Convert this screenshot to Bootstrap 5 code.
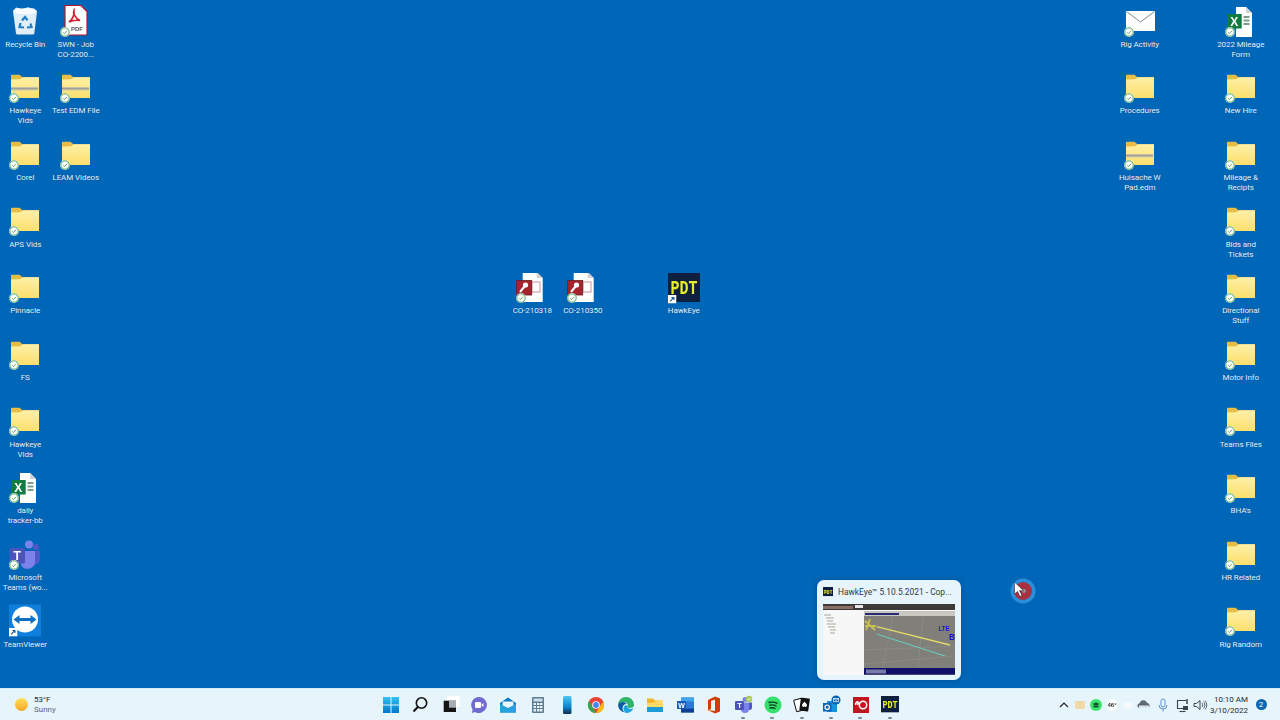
<!DOCTYPE html>
<html lang="en">
<head>
    <meta charset="UTF-8">
    <meta name="viewport" content="width=device-width, initial-scale=1.0">
    <title>Desktop</title>
    <link href="https://cdn.jsdelivr.net/npm/bootstrap@5.3.2/dist/css/bootstrap.min.css" rel="stylesheet">
    <style>
        body {
            width: 1280px;
            height: 720px;
            overflow: hidden;
            background: #0067b8;
            font-family: Roboto, "Noto Sans", sans-serif;
        }
        .desktop { height: 688px; }
        .strip-left { position: absolute; left: 0; top: 0; }
        .strip-right { position: absolute; right: 14px; top: 0; gap: 50.5px; }
        .strip-mid { position: absolute; left: 507px; top: 266.67px; }
        .desk-col { width: 50.5px; }
        .desk-item { height: 66.67px; padding-top: 6.5px; }
        .desk-ico { position: relative; width: 32px; height: 32px; flex: none; filter: blur(.3px); }
        .desk-ico > svg { display: block; width: 32px; height: 32px; overflow: visible; }
        .desk-ico .ok-badge { position: absolute; left: 0; top: 20px; width: 10px; height: 10px; }
        .desk-ico .arrow-badge { position: absolute; left: 0; top: 21.5px; width: 8.5px; height: 8.5px; }
        .desk-name {
            width: 50.5px;
            margin-top: 1.2px;
            font-size: 8px;
            letter-spacing: -.08px;
            line-height: 10px;
            color: #e6f3fc;
            text-align: center;
            white-space: nowrap;
            text-shadow: 0 0 1px rgba(0, 40, 90, .5);
        }
        .pad-spacer { width: 50.5px; }

        .thumb-pop {
            position: absolute;
            left: 817px;
            top: 580px;
            width: 144px;
            height: 100px;
            background: #e6f4fc;
            border-radius: 7px;
            box-shadow: 0 0 6px rgba(0, 40, 90, .35);
        }
        .thumb-title { height: 24px; padding-left: 6px; font-size: 8.4px; color: #2b3a45; white-space: nowrap; }
        .thumb-title svg { width: 10px; height: 10px; margin-right: 5px; flex: none; }
        .thumb-shot { display: block; width: 132px; height: 71px; margin-left: 6px; filter: blur(.3px); }

        .mouse-mark { position: absolute; left: 1010px; top: 578px; width: 26px; height: 26px; filter: blur(.4px); }

        .task-bar {
            height: 32px;
            background: #e6f4fb;
            border-top: 1px solid #d3ecfa;
            display: grid;
            grid-template-columns: 1fr auto 1fr;
            align-items: center;
        }
        .wx-block { padding-left: 15px; }
        .wx-sun {
            width: 13px;
            height: 13px;
            border-radius: 50%;
            background: linear-gradient(#ffdf5e, #f5a623);
            margin-right: 6px;
            filter: blur(.3px);
        }
        .wx-text { font-size: 8px; line-height: 10px; color: #1f2a33; }
        .wx-text span { display: block; color: #5a6670; }
        .task-row { margin-left: 1px; }
        .task-btn { position: relative; width: 29.35px; height: 31px; }
        .task-btn svg { width: 18px; height: 18px; overflow: visible; filter: blur(.25px); }
        .task-btn.on::after {
            content: "";
            position: absolute;
            left: 12.5px;
            bottom: 1px;
            width: 4px;
            height: 2px;
            border-radius: 1px;
            background: #7d8a94;
        }
        .tray { height: 31px; padding-right: 13.5px; }
        .tray-ico { width: 16px; height: 16px; flex: none; overflow: visible; filter: blur(.25px); }
        .gap-3px { margin-left: 3px; }
        .gap-4px { margin-left: 4px; }
        .gap-1px { margin-left: 1px; }
        .clock-box {
            width: 38px;
            margin-left: 2px;
            margin-right: 3px;
            font-size: 8px;
            line-height: 11px;
            color: #1f2a33;
            text-align: right;
            white-space: nowrap;
        }
        .note-dot {
            width: 11px;
            height: 11px;
            margin-left: 4.5px;
            border-radius: 50%;
            background: #0a66b0;
            color: #fff;
            font-size: 8px;
            line-height: 11px;
            text-align: center;
        }
    </style>
</head>
<body class="position-relative">

    <!-- shared icons -->
    <svg width="0" height="0" class="position-absolute">
        <defs>
            <linearGradient id="gFold" x1="0" y1="0" x2="0" y2="1">
                <stop offset="0" stop-color="#fff0a6"/>
                <stop offset="1" stop-color="#fbdf6c"/>
            </linearGradient>
            <linearGradient id="gBlue" x1="0" y1="0" x2="0" y2="1">
                <stop offset="0" stop-color="#35c1f1"/>
                <stop offset="1" stop-color="#0078c8"/>
            </linearGradient>
            <linearGradient id="gPhone" x1="0" y1="0" x2="0" y2="1">
                <stop offset="0" stop-color="#4cc6f0"/>
                <stop offset=".6" stop-color="#0d86cf"/>
                <stop offset="1" stop-color="#0b2f50"/>
            </linearGradient>
            <symbol id="i-folder" viewBox="0 0 32 32">
                <path d="M2 3a1 1 0 0 1 1-1.300h7.500l3 2.600H30V25H2z" fill="#e9bd45"/>
                <path d="M2 6.500l9-.2 3-2h16V25H2z" fill="url(#gFold)"/>
            </symbol>
            <symbol id="i-folder-zip" viewBox="0 0 32 32">
                <path d="M2 3a1 1 0 0 1 1-1.300h7.500l3 2.600H30V25H2z" fill="#e9bd45"/>
                <path d="M2 6.500l9-.2 3-2h16V25H2z" fill="url(#gFold)"/>
                <rect x="2" y="14" width="27" height="3.400" fill="#c3c0ac"/>
                <rect x="2" y="15.200" width="27" height=".9" fill="#9a978a"/>
            </symbol>
            <symbol id="i-ok" viewBox="0 0 10 10">
                <circle cx="5" cy="5" r="4.900" fill="#fff"/>
                <circle cx="5" cy="5" r="4.200" fill="none" stroke="#3d9b50" stroke-width=".9"/>
                <path d="M3 5.200l1.400 1.400L7 3.800" fill="none" stroke="#3d8a50" stroke-width=".8"/>
            </symbol>
            <symbol id="i-arrow" viewBox="0 0 10 10">
                <rect width="10" height="10" fill="#fff"/>
                <path d="M2.500 7.500L6.500 3.500M4 3h3v3" fill="none" stroke="#1c4f8a" stroke-width="1.200"/>
            </symbol>
            <symbol id="i-xlsdoc" viewBox="0 0 32 32">
                <path d="M11 0h10l6 6v24H11z" fill="#fff"/>
                <path d="M21 0l6 6h-6z" fill="#cfd6d4"/>
                <path d="M18.500 10h6M18.500 13.500h6M18.500 17h6" stroke="#7f9f8c" stroke-width="2"/>
                <rect x="2" y="7" width="14.700" height="14.500" fill="#107c41"/>
                <text x="9.300" y="18.500" text-anchor="middle" font-family="Liberation Sans" font-weight="700" font-size="12" fill="#fff">X</text>
            </symbol>
            <symbol id="i-acc" viewBox="0 0 32 32">
                <path d="M6.700 -1h14l6 6v24h-20z" fill="#fff"/>
                <path d="M20.700 -1l6 6h-6z" fill="#d6d2d2"/>
                <rect x="16" y="9" width="8" height="10" fill="none" stroke="#d4a3ad" stroke-width="1.200"/>
                <rect x=".7" y="7.500" width="15" height="14.500" fill="#a4262c" stroke="#6d1a22" stroke-width=".8"/>
                <circle cx="9.500" cy="12" r="2.600" fill="#fff"/>
                <path d="M8.500 13.500L4 19" stroke="#fff" stroke-width="2"/>
            </symbol>
            <symbol id="i-pdt" viewBox="0 0 32 32">
                <rect y="-1" width="32" height="30" fill="#0f1f3f"/>
                <text x="16" y="21" text-anchor="middle" textLength="27" lengthAdjust="spacingAndGlyphs" font-family="Liberation Mono" font-weight="700" font-size="20" fill="#e8ee2a">PDT</text>
            </symbol>
        </defs>
    </svg>

    <div class="desktop position-relative">

        <div class="strip-left d-flex">
            <div class="desk-col d-flex flex-column">
                <div class="desk-item d-flex flex-column align-items-center">
                    <div class="desk-ico"><svg viewBox="0 0 32 32">
                        <path d="M4 4l3-3.500 6 1.500 6-1.800 5 1.500 4 2.800-2.700 22a1.500 1.500 0 0 1-1.500 1H8.500a1.500 1.500 0 0 1-1.500-1z" fill="#dfeef8"/>
                        <path d="M4 4l4 3h16l4-3-3-2.500H8z" fill="#f7fbfe"/>
                        <path d="M13 13.500l3-3.500 2.500 3.200M21.500 16.500l1 3.500-4.500.500M11.500 16l-1 4 4.500.500" fill="none" stroke="#1f7fc4" stroke-width="2.200"/>
                    </svg></div>
                    <div class="desk-name">Recycle Bin</div>
                </div>
                <div class="desk-item d-flex flex-column align-items-center">
                    <div class="desk-ico"><svg><use href="#i-folder-zip"/></svg><svg class="ok-badge"><use href="#i-ok"/></svg></div>
                    <div class="desk-name">Hawkeye<br>Vids</div>
                </div>
                <div class="desk-item d-flex flex-column align-items-center">
                    <div class="desk-ico"><svg><use href="#i-folder"/></svg><svg class="ok-badge"><use href="#i-ok"/></svg></div>
                    <div class="desk-name">Corel</div>
                </div>
                <div class="desk-item d-flex flex-column align-items-center">
                    <div class="desk-ico"><svg><use href="#i-folder"/></svg><svg class="ok-badge"><use href="#i-ok"/></svg></div>
                    <div class="desk-name">APS Vids</div>
                </div>
                <div class="desk-item d-flex flex-column align-items-center">
                    <div class="desk-ico"><svg><use href="#i-folder"/></svg><svg class="ok-badge"><use href="#i-ok"/></svg></div>
                    <div class="desk-name">Pinnacle</div>
                </div>
                <div class="desk-item d-flex flex-column align-items-center">
                    <div class="desk-ico"><svg><use href="#i-folder"/></svg><svg class="ok-badge"><use href="#i-ok"/></svg></div>
                    <div class="desk-name">FS</div>
                </div>
                <div class="desk-item d-flex flex-column align-items-center">
                    <div class="desk-ico"><svg><use href="#i-folder"/></svg><svg class="ok-badge"><use href="#i-ok"/></svg></div>
                    <div class="desk-name">Hawkeye<br>Vids</div>
                </div>
                <div class="desk-item d-flex flex-column align-items-center">
                    <div class="desk-ico"><svg><use href="#i-xlsdoc"/></svg><svg class="ok-badge"><use href="#i-ok"/></svg></div>
                    <div class="desk-name">daily<br>tracker-bb</div>
                </div>
                <div class="desk-item d-flex flex-column align-items-center">
                    <div class="desk-ico"><svg viewBox="0 0 32 32">
                        <circle cx="20" cy="4.500" r="4" fill="#7b83eb"/>
                        <circle cx="27" cy="7" r="3" fill="#5059c9"/>
                        <path d="M22 11h9v9a6 6 0 0 1-9 4z" fill="#5059c9"/>
                        <path d="M12 11h14v11a7.500 7.500 0 0 1-14 3z" fill="#7b83eb"/>
                        <rect x=".5" y="8" width="15.500" height="15.500" rx="1.500" fill="#4b53bc"/>
                        <text x="8.200" y="20" text-anchor="middle" font-family="Liberation Sans" font-weight="700" font-size="12" fill="#fff">T</text>
                    </svg><svg class="ok-badge"><use href="#i-ok"/></svg></div>
                    <div class="desk-name">Microsoft<br>Teams (wo...</div>
                </div>
                <div class="desk-item d-flex flex-column align-items-center">
                    <div class="desk-ico"><svg viewBox="0 0 32 32">
                        <rect y="-1.500" width="32" height="32" fill="#0e7fdc"/>
                        <circle cx="16" cy="13.500" r="13" fill="#fff"/>
                        <path d="M4.500 13.500l6-4.500v3h11V9l6 4.500-6 4.500v-3h-11v3z" fill="#0e6fc0"/>
                    </svg><svg class="arrow-badge"><use href="#i-arrow"/></svg></div>
                    <div class="desk-name">TeamViewer</div>
                </div>
            </div>
            <div class="desk-col d-flex flex-column">
                <div class="desk-item d-flex flex-column align-items-center">
                    <div class="desk-ico"><svg viewBox="0 0 32 32">
                        <path d="M5 -1.500h16l6 6V27a1 1 0 0 1-1 1H5z" fill="#fff" stroke="#b5172a" stroke-width="1.200"/>
                        <path d="M9 15c4-3 5.500-8 5-12 -1.500 3 1 8 6 10.500 -4-.5-8 0-11 1.500z" fill="none" stroke="#d3202f" stroke-width="1.600"/>
                        <text x="17" y="24" text-anchor="middle" font-family="Liberation Sans" font-weight="700" font-size="6" fill="#55555f">PDF</text>
                    </svg><svg class="ok-badge"><use href="#i-ok"/></svg></div>
                    <div class="desk-name">SWN - Job<br>CO-2200...</div>
                </div>
                <div class="desk-item d-flex flex-column align-items-center">
                    <div class="desk-ico"><svg><use href="#i-folder-zip"/></svg><svg class="ok-badge"><use href="#i-ok"/></svg></div>
                    <div class="desk-name">Test EDM File</div>
                </div>
                <div class="desk-item d-flex flex-column align-items-center">
                    <div class="desk-ico"><svg><use href="#i-folder"/></svg><svg class="ok-badge"><use href="#i-ok"/></svg></div>
                    <div class="desk-name">LEAM Videos</div>
                </div>
            </div>
        </div>

        <div class="strip-mid d-flex">
            <div class="desk-item desk-col d-flex flex-column align-items-center">
                <div class="desk-ico"><svg><use href="#i-acc"/></svg><svg class="ok-badge"><use href="#i-ok"/></svg></div>
                <div class="desk-name">CO-210318</div>
            </div>
            <div class="desk-item desk-col d-flex flex-column align-items-center">
                <div class="desk-ico"><svg><use href="#i-acc"/></svg><svg class="ok-badge"><use href="#i-ok"/></svg></div>
                <div class="desk-name">CO-210350</div>
            </div>
            <div class="pad-spacer"></div>
            <div class="desk-item desk-col d-flex flex-column align-items-center">
                <div class="desk-ico"><svg><use href="#i-pdt"/></svg><svg class="arrow-badge"><use href="#i-arrow"/></svg></div>
                <div class="desk-name">HawkEye</div>
            </div>
        </div>

        <div class="strip-right d-flex">
            <div class="desk-col d-flex flex-column">
                <div class="desk-item d-flex flex-column align-items-center">
                    <div class="desk-ico"><svg viewBox="0 0 32 32">
                        <rect x="2" y="4" width="29" height="20" fill="#fff"/>
                        <path d="M2.500 4.500L16.500 15l14-10.500" fill="none" stroke="#7d8a96" stroke-width="1"/>
                    </svg><svg class="ok-badge"><use href="#i-ok"/></svg></div>
                    <div class="desk-name">Rig Activity</div>
                </div>
                <div class="desk-item d-flex flex-column align-items-center">
                    <div class="desk-ico"><svg><use href="#i-folder"/></svg><svg class="ok-badge"><use href="#i-ok"/></svg></div>
                    <div class="desk-name">Procedures</div>
                </div>
                <div class="desk-item d-flex flex-column align-items-center">
                    <div class="desk-ico"><svg><use href="#i-folder-zip"/></svg><svg class="ok-badge"><use href="#i-ok"/></svg></div>
                    <div class="desk-name">Huisache W<br>Pad.edm</div>
                </div>
            </div>
            <div class="desk-col d-flex flex-column">
                <div class="desk-item d-flex flex-column align-items-center">
                    <div class="desk-ico"><svg><use href="#i-xlsdoc"/></svg><svg class="ok-badge"><use href="#i-ok"/></svg></div>
                    <div class="desk-name">2022 Mileage<br>Form</div>
                </div>
                <div class="desk-item d-flex flex-column align-items-center">
                    <div class="desk-ico"><svg><use href="#i-folder"/></svg><svg class="ok-badge"><use href="#i-ok"/></svg></div>
                    <div class="desk-name">New Hire</div>
                </div>
                <div class="desk-item d-flex flex-column align-items-center">
                    <div class="desk-ico"><svg><use href="#i-folder"/></svg><svg class="ok-badge"><use href="#i-ok"/></svg></div>
                    <div class="desk-name">Mileage &amp;<br>Recipts</div>
                </div>
                <div class="desk-item d-flex flex-column align-items-center">
                    <div class="desk-ico"><svg><use href="#i-folder"/></svg><svg class="ok-badge"><use href="#i-ok"/></svg></div>
                    <div class="desk-name">Bids and<br>Tickets</div>
                </div>
                <div class="desk-item d-flex flex-column align-items-center">
                    <div class="desk-ico"><svg><use href="#i-folder"/></svg><svg class="ok-badge"><use href="#i-ok"/></svg></div>
                    <div class="desk-name">Directional<br>Stuff</div>
                </div>
                <div class="desk-item d-flex flex-column align-items-center">
                    <div class="desk-ico"><svg><use href="#i-folder"/></svg><svg class="ok-badge"><use href="#i-ok"/></svg></div>
                    <div class="desk-name">Motor Info</div>
                </div>
                <div class="desk-item d-flex flex-column align-items-center">
                    <div class="desk-ico"><svg><use href="#i-folder"/></svg><svg class="ok-badge"><use href="#i-ok"/></svg></div>
                    <div class="desk-name">Teams Files</div>
                </div>
                <div class="desk-item d-flex flex-column align-items-center">
                    <div class="desk-ico"><svg><use href="#i-folder"/></svg><svg class="ok-badge"><use href="#i-ok"/></svg></div>
                    <div class="desk-name">BHA's</div>
                </div>
                <div class="desk-item d-flex flex-column align-items-center">
                    <div class="desk-ico"><svg><use href="#i-folder"/></svg><svg class="ok-badge"><use href="#i-ok"/></svg></div>
                    <div class="desk-name">HR Related</div>
                </div>
                <div class="desk-item d-flex flex-column align-items-center">
                    <div class="desk-ico"><svg><use href="#i-folder"/></svg><svg class="ok-badge"><use href="#i-ok"/></svg></div>
                    <div class="desk-name">Rig Random</div>
                </div>
            </div>
        </div>

        <!-- taskbar preview -->
        <div class="thumb-pop">
            <div class="thumb-title d-flex align-items-center">
                <svg><use href="#i-pdt"/></svg>HawkEye™ 5.10.5.2021 - Cop...
            </div>
            <svg class="thumb-shot" viewBox="0 0 132 71">
                <rect width="132" height="71" fill="#f6f7f6"/>
                <rect width="132" height="6" fill="#3d3a38"/>
                <rect x="0" y="2" width="30" height="3" fill="#8a6f68"/>
                <rect x="32" y="1" width="8" height="3" fill="#e6e6e6"/>
                <rect x="41" y="7.500" width="91" height="63.500" fill="#807f7a"/>
                <rect x="41" y="7.500" width="91" height="4.500" fill="#c9c9c2"/>
                <rect x="42" y="9" width="34" height="2" fill="#2a2a70"/>
                <path d="M1 11h7M3 14h8M4 17h6M4 20h9M5 23h7M7 26h6M7 29h5" stroke="#a9a79c" stroke-width="1"/>
                <path d="M41 46l91-4M41 60l91-8M70 12l-12 59M100 12l-6 59" stroke="#94948e" stroke-width=".5"/>
                <path d="M53.700 22.700L127 41" stroke="#e0d868" stroke-width="1.300"/>
                <path d="M53.700 30L122 52" stroke="#6cc8c0" stroke-width="1.200"/>
                <path d="M42 17l10 9M47 15l-4 11M42 22h11" stroke="#c9bf4d" stroke-width="1.800"/>
                <text x="121" y="26.700" text-anchor="middle" textLength="11" lengthAdjust="spacingAndGlyphs" font-family="Liberation Sans" font-weight="700" font-size="7.500" fill="#1616d8">LTE</text>
                <text x="126" y="36" font-family="Liberation Sans" font-weight="700" font-size="8.500" fill="#1616d8">B</text>
                <rect x="41" y="64" width="91" height="6.500" fill="#10106b"/>
                <rect x="43" y="65.500" width="20" height="4" fill="#7a7aa8"/>
            </svg>
        </div>

        <!-- mouse highlight -->
        <svg class="mouse-mark" viewBox="0 0 26 26">
            <circle cx="13" cy="13" r="12.500" fill="#2a8fd8"/>
            <circle cx="13" cy="13" r="9" fill="#a8303f"/>
            <circle cx="14" cy="13" r="2" fill="#9a8f96"/>
            <path d="M4.500 4v12l3-2.500 2.500 5 2-1-2.500-4.800h4z" fill="#fff" stroke="#22303c" stroke-width=".6"/>
        </svg>
    </div>

    <div class="task-bar">
        <div class="wx-block d-flex align-items-center">
            <div class="wx-sun"></div>
            <div class="wx-text">53°F<span>Sunny</span></div>
        </div>

        <div class="task-row d-flex">
            <div class="task-btn d-flex align-items-center justify-content-center"><svg viewBox="0 0 18 18"><path d="M1 1h7.500v7.500H1zM9.500 1H17v7.500H9.500zM1 9.500h7.500V17H1zM9.500 9.500H17V17H9.500z" fill="url(#gBlue)"/></svg></div>
            <div class="task-btn d-flex align-items-center justify-content-center"><svg viewBox="0 0 18 18"><circle cx="10.500" cy="7" r="5.200" fill="none" stroke="#111" stroke-width="1.600"/><path d="M6.800 11L2.500 15.500" stroke="#111" stroke-width="2"/></svg></div>
            <div class="task-btn d-flex align-items-center justify-content-center"><svg viewBox="0 0 18 18"><rect x="6" y="0" width="12.500" height="11" fill="#fff"/><rect x="2.700" y="4.700" width="12.300" height="11.300" fill="#161616"/><rect x="8" y="4.700" width="7" height="7" fill="#a9adaf"/></svg></div>
            <div class="task-btn d-flex align-items-center justify-content-center"><svg viewBox="0 0 18 18"><path d="M9 1a8 8 0 1 1-4 15l-3 1 .6-3.500A8 8 0 0 1 9 1z" fill="#6f6bd0"/><rect x="5" y="6" width="6" height="6" rx="1" fill="#fff"/><path d="M11.500 8.500l2-1.500v4l-2-1.500z" fill="#fff"/></svg></div>
            <div class="task-btn d-flex align-items-center justify-content-center"><svg viewBox="0 0 18 18"><path d="M1 7l8-5.500L17 7v9.500H1z" fill="#0c79c4"/><path d="M3.500 5.500h11V10L9 12.500 3.500 10z" fill="#eaf6fd"/><path d="M1 8l8 4 8-4v8.500H1z" fill="#28a0e0"/></svg></div>
            <div class="task-btn d-flex align-items-center justify-content-center"><svg viewBox="0 0 18 18"><rect x="3" y="1" width="12" height="16" rx="1" fill="#5c7e94"/><rect x="4.500" y="2.500" width="9" height="3" fill="#cfe0ea"/><path d="M4.500 7h2.500v2H4.500zM8 7h2.500v2H8zM11 7h2.500v2H11zM4.500 10h2.500v2H4.500zM8 10h2.500v2H8zM11 10h2.500v2H11zM4.500 13h2.500v2.500H4.500zM8 13h2.500v2.500H8zM11 13h2.500v2.500H11z" fill="#e7eef2"/></svg></div>
            <div class="task-btn d-flex align-items-center justify-content-center"><svg viewBox="0 0 18 18"><rect x="5" y="0" width="8.500" height="18" rx="1.500" fill="url(#gPhone)"/></svg></div>
            <div class="task-btn d-flex align-items-center justify-content-center"><svg viewBox="0 0 18 18"><circle cx="9" cy="9" r="8" fill="#ea4335"/><path d="M16.200 5.500A8 8 0 0 1 9 17l3.500-6z" fill="#fbbc05"/><path d="M9 17A8 8 0 0 1 2 5l4 6.500z" fill="#34a853"/><circle cx="9" cy="9" r="3.800" fill="#fff"/><circle cx="9" cy="9" r="2.900" fill="#4285f4"/></svg></div>
            <div class="task-btn d-flex align-items-center justify-content-center"><svg viewBox="0 0 18 18"><path d="M1 9a8 8 0 0 1 16 0c0 1.800-1.500 3-4 3-2 0-3-.6-3-1.200 0-.5.800-.8.800-1.800 0-1.500-1.500-3-4-3C3.500 6 1.500 7.500 1 9z" fill="#2db36c"/><path d="M1 9c.5-2 2.500-3 5-3 2 0 3 1 3.500 2-2.500 0-4 2-4 4.500 0 1.500 1 3 2.500 4A8 8 0 0 1 1 9z" fill="#0c59a4"/><path d="M6.500 12.500c0-2 1.500-3.200 3.200-3.400 0 2 1.500 3.900 3.800 3.900 1 0 2-.3 3-.8A8 8 0 0 1 9 17c-1.500-1-2.500-2.700-2.500-4.500z" fill="#1da4e0"/></svg></div>
            <div class="task-btn d-flex align-items-center justify-content-center"><svg viewBox="0 0 18 18"><path d="M1 2.500h6l2 2h8V16H1z" fill="#f0b429"/><path d="M1 7l7-.5 2-2h7V16H1z" fill="#ffd966"/><path d="M1 11h16v5H1z" fill="#1b9bd8"/></svg></div>
            <div class="task-btn d-flex align-items-center justify-content-center"><svg viewBox="0 0 18 18"><rect x="5" y="1.500" width="13" height="15" rx="1" fill="#2b7cd3"/><rect x="5" y="1.500" width="13" height="4" fill="#41a5ee"/><rect x="5" y="12.500" width="13" height="4" fill="#103f91"/><rect x="1" y="5" width="9" height="8" fill="#185abd"/><text x="5.500" y="11.500" text-anchor="middle" font-family="Liberation Sans" font-weight="700" font-size="7" fill="#fff">W</text></svg></div>
            <div class="task-btn d-flex align-items-center justify-content-center"><svg viewBox="0 0 18 18"><path d="M3 4l7-3.500 5 2v13l-5 2-7-3.500 7 1V3.500L6 5v8l-3 1.500z" fill="#d83b01"/></svg></div>
            <div class="task-btn on d-flex align-items-center justify-content-center"><svg viewBox="0 0 18 18"><circle cx="11" cy="3.500" r="2.500" fill="#7b83eb"/><path d="M7 6.500h8V13a4 4 0 0 1-8 0z" fill="#7b83eb"/><path d="M15 6.500h3V12a2.500 2.500 0 0 1-3 2z" fill="#5059c9"/><rect x="1" y="5" width="9" height="9" rx="1" fill="#4b53bc"/><text x="5.500" y="12" text-anchor="middle" font-family="Liberation Sans" font-weight="700" font-size="7.500" fill="#fff">T</text><circle cx="15" cy="3" r="3.200" fill="#a7c957"/><path d="M13.500 3l1.200 1.200 2-2.200" fill="none" stroke="#fff" stroke-width=".8"/></svg></div>
            <div class="task-btn on d-flex align-items-center justify-content-center"><svg viewBox="0 0 18 18"><circle cx="9" cy="9" r="8.500" fill="#33e06c"/><path d="M4.500 6.500c3-.8 6-.6 9 .8M5 9.300c2.500-.6 5.200-.4 7.500.8M5.500 12c2-.4 4.200-.3 6 .7" fill="none" stroke="#0f3d1f" stroke-width="1.300"/></svg></div>
            <div class="task-btn on d-flex align-items-center justify-content-center"><svg viewBox="0 0 18 18"><rect x="2" y="3" width="8" height="12" rx="1" fill="#fff" stroke="#111" transform="rotate(-15 6 9)"/><rect x="7" y="2" width="9" height="13" rx="1" fill="#111" transform="rotate(8 11 9)"/><path d="M11.500 5.500c1.200 1.800 2.500 2.500 2.500 4a1.500 1.500 0 0 1-2.500 1 1.500 1.500 0 0 1-2.500-1c0-1.500 1.300-2.200 2.500-4z" fill="#fff"/></svg></div>
            <div class="task-btn on d-flex align-items-center justify-content-center"><svg viewBox="0 0 18 18"><rect x="5" y="5" width="10" height="11" fill="#1f8fdc"/><rect x="1" y="7" width="8.500" height="8.500" fill="#0a63b0"/><circle cx="5.200" cy="11.200" r="2.200" fill="none" stroke="#fff" stroke-width="1.200"/><circle cx="14" cy="4" r="4.500" fill="#0a63b0"/><path d="M11.500 2.500h5v3.200h-5zM11.500 2.500L14 4.500l2.500-2" fill="none" stroke="#fff" stroke-width=".7"/></svg></div>
            <div class="task-btn on d-flex align-items-center justify-content-center"><svg viewBox="0 0 18 18"><rect x="1" y="1" width="16" height="16" fill="#c2151f"/><circle cx="11" cy="9" r="3.700" fill="none" stroke="#fff" stroke-width="1.500"/><path d="M3.500 9a3.500 3.500 0 0 1 3-3.500M5.500 9a2 2 0 0 1 2-2" fill="none" stroke="#fff" stroke-width="1.300"/></svg></div>
            <div class="task-btn on d-flex align-items-center justify-content-center"><svg viewBox="0 0 32 32"><use href="#i-pdt"/></svg></div>
        </div>

        <div class="tray d-flex align-items-center justify-content-end">
            <svg class="tray-ico" viewBox="0 0 16 16"><path d="M4 10l4-4 4 4" fill="none" stroke="#222" stroke-width="1.200"/></svg>
            <svg class="tray-ico" viewBox="0 0 16 16"><rect x="3" y="4" width="10" height="8" rx="1" fill="#f2d9a8"/></svg>
            <svg class="tray-ico" viewBox="0 0 16 16"><circle cx="8" cy="8" r="6" fill="#3be36f"/><path d="M4.500 7l3.500-1.800L11.500 7 8 9z" fill="#145a2e"/><path d="M5.500 8.500V10.500h5V8.500" fill="#145a2e"/></svg>
            <svg class="tray-ico" viewBox="0 0 16 16"><circle cx="8" cy="8" r="6" fill="#fafcfd"/><text x="8" y="10.300" text-anchor="middle" font-family="Liberation Sans" font-weight="700" font-size="6" fill="#333">46°</text></svg>
            <svg class="tray-ico" viewBox="0 0 16 16"><ellipse cx="8" cy="8.500" rx="5" ry="3.500" fill="#f4fafd"/></svg>
            <svg class="tray-ico" viewBox="0 0 16 16"><path d="M3 11a2.500 2.500 0 0 1 .5-4.800 4 4 0 0 1 7.500-.5 3 3 0 0 1 1.500 5.300z" fill="#5f6b73"/><path d="M3 8.500h10V11H3z" fill="#dfe6ea"/></svg>
            <svg class="tray-ico gap-3px" viewBox="0 0 16 16"><rect x="6" y="2" width="4" height="8" rx="2" fill="none" stroke="#5a94cf" stroke-width="1"/><path d="M4 8a4 4 0 0 0 8 0M8 12v2.500" fill="none" stroke="#5a94cf" stroke-width="1"/></svg>
            <svg class="tray-ico gap-4px" viewBox="0 0 16 16"><path d="M11 3.500H2.500v8H11" fill="none" stroke="#3a444c" stroke-width="1.100"/><path d="M4.500 14.500h6" stroke="#3a444c" stroke-width="1.100"/><path d="M12 2v5" stroke="#3a444c" stroke-width="1.500"/><rect x="8" y="9" width="5" height="4" fill="#3a444c"/></svg>
            <svg class="tray-ico gap-1px" viewBox="0 0 16 16"><path d="M2 6.500h2.500L8 3.500v9l-3.500-3H2z" fill="none" stroke="#3a444c" stroke-width="1"/><path d="M10 6a3 3 0 0 1 0 4M11.500 4.500a5 5 0 0 1 0 7M13 3.500a6.500 6.500 0 0 1 0 9" fill="none" stroke="#3a444c" stroke-width=".8"/></svg>
            <div class="clock-box">10:10 AM<br>3/10/2022</div>
            <div class="note-dot">2</div>
        </div>
    </div>

    <script src="https://cdn.jsdelivr.net/npm/bootstrap@5.3.2/dist/js/bootstrap.bundle.min.js"></script>
</body>
</html>
